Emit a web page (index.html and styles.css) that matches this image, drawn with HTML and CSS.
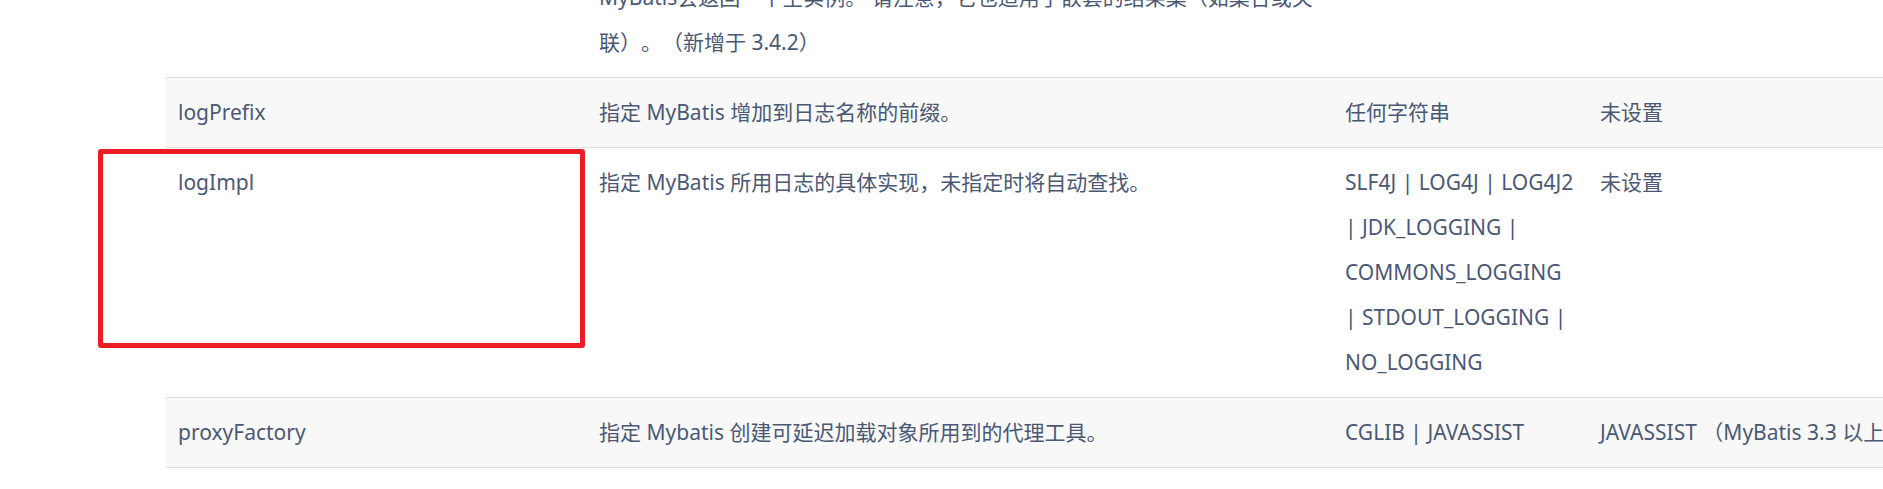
FILE: index.html
```html
<!DOCTYPE html>
<html lang="zh-CN">

<head>
    <meta charset="UTF-8">
    <meta name="viewport" content="width=device-width, initial-scale=1.0">
    <title>MyBatis 配置 - settings</title>
    <link rel="stylesheet" href="styles.css">
</head>

<body>
    <div class="page">
        <table class="settings">
            <colgroup>
                <col class="col-name">
                <col class="col-desc">
                <col class="col-values">
                <col class="col-default">
            </colgroup>
            <tbody>
                <tr>
                    <td>returnInstanceForEmptyRow</td>
                    <td>当返回行的所有列都是空时，MyBatis默认返回 null。 当开启这个设置时，MyBatis会返回一个空实例。 请注意，它也适用于嵌套的结果集（如集合或关联）。（新增于 3.4.2）</td>
                    <td>true | false</td>
                    <td>false</td>
                </tr>
                <tr>
                    <td>logPrefix</td>
                    <td>指定 MyBatis 增加到日志名称的前缀。</td>
                    <td>任何字符串</td>
                    <td>未设置</td>
                </tr>
                <tr>
                    <td>logImpl</td>
                    <td>指定 MyBatis 所用日志的具体实现，未指定时将自动查找。</td>
                    <td>SLF4J | LOG4J | LOG4J2 | JDK_LOGGING | COMMONS_LOGGING | STDOUT_LOGGING | NO_LOGGING</td>
                    <td>未设置</td>
                </tr>
                <tr>
                    <td>proxyFactory</td>
                    <td>指定 Mybatis 创建可延迟加载对象所用到的代理工具。</td>
                    <td>CGLIB | JAVASSIST</td>
                    <td>JAVASSIST （MyBatis 3.3 以上）</td>
                </tr>
                <tr>
                    <td>vfsImpl</td>
                    <td>指定 VFS 的实现</td>
                    <td>自定义 VFS 的实现的类全限定名，以逗号分隔。</td>
                    <td>未设置</td>
                </tr>
            </tbody>
        </table>
        <div class="mark"></div>
    </div>
</body>

</html>
```

FILE: styles.css
```css
body {
    margin: 0;
    background-color: #ffffff;
    overflow: hidden;
    font-family: "Noto Sans", "Noto Sans CJK SC", sans-serif;
    color: #4a5876;
}

.page {
    position: relative;
    display: flow-root;
    padding-left: 166px;
}

.settings {
    border-collapse: collapse;
    table-layout: fixed;
    width: 1822px;
    margin-top: -83px;
    font-size: 21px;
    line-height: 45px;
    text-spacing-trim: space-all;
}

.col-name {
    width: 421px;
}

.col-desc {
    width: 746px;
}

.col-values {
    width: 255px;
}

.col-default {
    width: 400px;
}

.settings td {
    padding: 12px;
    vertical-align: top;
    border-top: 1px solid #dedede;
}

.settings tr:nth-child(even) td {
    background-color: #f8f8f8;
}

/* red highlight drawn over the screenshot */
.mark {
    position: absolute;
    left: 98px;
    top: 149px;
    width: 487px;
    height: 199px;
    box-sizing: border-box;
    border: 5px solid #ec1c24;
    border-radius: 3px;
}
```
